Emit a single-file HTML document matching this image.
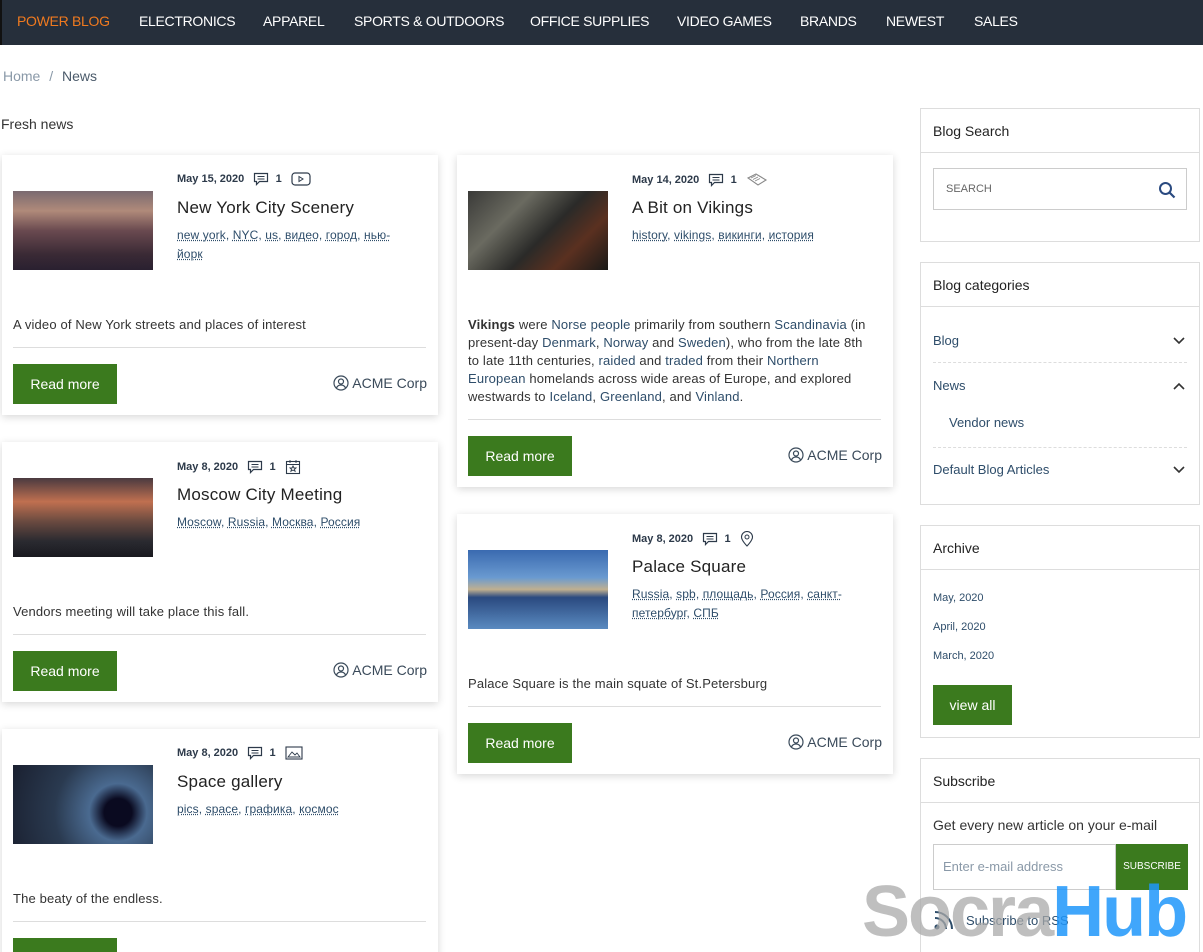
<!DOCTYPE html>
<html><head><meta charset="utf-8">
<style>
*{box-sizing:border-box;margin:0;padding:0}
html,body{width:1203px;height:952px;overflow:hidden}
body{background:#fff;font-family:"Liberation Sans","DejaVu Sans",sans-serif;color:#333;position:relative}
.nav{position:absolute;left:0;top:0;width:1203px;height:45px;background:#262f3b;border-left:2px solid #111}
.nav span{position:absolute;top:13px;font-size:14px;color:#fff;letter-spacing:-0.3px}
.a{position:absolute}
.card{position:absolute;background:#fff;box-shadow:0 2px 8px rgba(0,0,0,.16);width:436px}
.meta{position:absolute;left:175px;top:17px;font-size:11px;color:#2d3a4a;font-weight:bold;white-space:nowrap}
.meta svg{vertical-align:middle}
.img{position:absolute;left:11px;top:36px;width:140px;height:79px}
.title{position:absolute;left:175px;top:43px;font-size:17px;color:#222;letter-spacing:0.2px}
.tags{position:absolute;left:175px;top:71px;font-size:12px;color:#2e4d6a;line-height:19px;width:230px;letter-spacing:0.1px}
.tags u{text-decoration:underline dotted;}
.desc{position:absolute;left:11px;font-size:13px;color:#333;line-height:18px;width:418px;letter-spacing:0.15px}
.hr{position:absolute;left:11px;width:413px;height:1px;background:#ddd}
.btn{position:absolute;left:11px;width:104px;height:40px;background:#3b7a1e;color:#fff;font-size:14px;text-align:center;line-height:40px}
.auth{position:absolute;right:11px;font-size:14px;color:#3a4a5a}
.auth svg{vertical-align:-3px}
.box{position:absolute;left:920px;width:280px;border:1px solid #ddd;background:#fff}
.box h3{font-size:14px;font-weight:normal;color:#222;height:44px;line-height:44px;padding-left:12px;border-bottom:1px solid #ddd}
a{color:#2e4d6a;text-decoration:none}
</style></head><body>
<div class="nav">
<span style="left:15px;color:#f07a1f">POWER BLOG</span>
<span style="left:137px">ELECTRONICS</span>
<span style="left:261px">APPAREL</span>
<span style="left:352px">SPORTS &amp; OUTDOORS</span>
<span style="left:528px">OFFICE SUPPLIES</span>
<span style="left:675px">VIDEO GAMES</span>
<span style="left:798px">BRANDS</span>
<span style="left:884px">NEWEST</span>
<span style="left:972px">SALES</span>
</div>
<div class="a" style="left:3px;top:68px;font-size:14px;color:#8a99a8">Home <span style="margin:0 5px">/</span> <span style="color:#4a5a6a">News</span></div>
<div class="a" style="left:1px;top:116px;font-size:14px;color:#333">Fresh news</div>

<div class="card" style="left:2px;top:155px;height:260px">
 <div class="meta">May 15, 2020 &nbsp;&nbsp;<svg width="16" height="14" viewBox="0 0 16 14"><path d="M1.5 1.5h13v8h-8l-3 3v-3h-2z" fill="none" stroke="#2d3a4a" stroke-width="1.2"/><path d="M4.5 4.5h7M4.5 7h7" stroke="#2d3a4a" stroke-width="1"/></svg>&nbsp; 1 &nbsp;&nbsp;<svg width="20" height="14" viewBox="0 0 20 14"><rect x="1" y="1" width="18" height="12" rx="3" fill="none" stroke="#2d3a4a" stroke-width="1.2"/><path d="M8 4.5l4 2.5-4 2.5z" fill="none" stroke="#2d3a4a"/></svg></div>
 <div class="img" style="background:linear-gradient(180deg,#7a6a70 0%,#b08a7a 25%,#6a4a50 50%,#3a2a35 80%,#2a2030 100%)"></div>
 <div class="title">New York City Scenery</div>
 <div class="tags"><u>new york</u>, <u>NYC</u>, <u>us</u>, <u>видео</u>, <u>город</u>, <u>нью-йорк</u></div>
 <div class="desc" style="top:161px">A video of New York streets and places of interest</div>
 <div class="hr" style="top:192px"></div>
 <div class="btn" style="top:209px">Read more</div>
 <div class="auth" style="top:220px"><svg width="16" height="16" viewBox="0 0 16 16"><circle cx="8" cy="8" r="7" fill="none" stroke="#3a4a5a" stroke-width="1.2"/><circle cx="8" cy="6.5" r="2.5" fill="none" stroke="#3a4a5a" stroke-width="1.2"/><path d="M3.5 13c1-2.5 3-3 4.5-3s3.5.5 4.5 3" fill="none" stroke="#3a4a5a" stroke-width="1.2"/></svg> ACME Corp</div>
</div>

<div class="card" style="left:2px;top:442px;height:260px">
 <div class="meta">May 8, 2020 &nbsp;&nbsp;<svg width="16" height="14" viewBox="0 0 16 14"><path d="M1.5 1.5h13v8h-8l-3 3v-3h-2z" fill="none" stroke="#2d3a4a" stroke-width="1.2"/><path d="M4.5 4.5h7M4.5 7h7" stroke="#2d3a4a" stroke-width="1"/></svg>&nbsp; 1 &nbsp;&nbsp;<svg width="16" height="16" viewBox="0 0 16 16"><rect x="1.5" y="2.5" width="13" height="12" fill="none" stroke="#2d3a4a" stroke-width="1.1"/><path d="M1.5 5.5h13M5 1v3M11 1v3M8 7l1 2h2l-1.5 1.3.6 2-2.1-1.3-2.1 1.3.6-2L5 9h2z" fill="none" stroke="#2d3a4a" stroke-width="0.9"/></svg></div>
 <div class="img" style="background:linear-gradient(180deg,#4a3a40 0%,#c07050 30%,#6a4a40 55%,#2a2a30 80%,#1a1a20 100%)"></div>
 <div class="title">Moscow City Meeting</div>
 <div class="tags"><u>Moscow</u>, <u>Russia</u>, <u>Москва</u>, <u>Россия</u></div>
 <div class="desc" style="top:161px">Vendors meeting will take place this fall.</div>
 <div class="hr" style="top:192px"></div>
 <div class="btn" style="top:209px">Read more</div>
 <div class="auth" style="top:220px"><svg width="16" height="16" viewBox="0 0 16 16"><circle cx="8" cy="8" r="7" fill="none" stroke="#3a4a5a" stroke-width="1.2"/><circle cx="8" cy="6.5" r="2.5" fill="none" stroke="#3a4a5a" stroke-width="1.2"/><path d="M3.5 13c1-2.5 3-3 4.5-3s3.5.5 4.5 3" fill="none" stroke="#3a4a5a" stroke-width="1.2"/></svg> ACME Corp</div>
</div>

<div class="card" style="left:2px;top:729px;height:260px">
 <div class="meta">May 8, 2020 &nbsp;&nbsp;<svg width="16" height="14" viewBox="0 0 16 14"><path d="M1.5 1.5h13v8h-8l-3 3v-3h-2z" fill="none" stroke="#2d3a4a" stroke-width="1.2"/><path d="M4.5 4.5h7M4.5 7h7" stroke="#2d3a4a" stroke-width="1"/></svg>&nbsp; 1 &nbsp;&nbsp;<svg width="18" height="14" viewBox="0 0 18 14"><rect x="1" y="1" width="16" height="12" fill="none" stroke="#2d3a4a" stroke-width="1.1"/><path d="M3 11l4-5 3 3 2-2 3 4z" fill="none" stroke="#2d3a4a" stroke-width="0.9"/></svg></div>
 <div class="img" style="background:radial-gradient(circle at 75% 60%,#0a0a20 0 12%,#4a6a90 25%,#2a3a50 55%,#1a2030 100%)"></div>
 <div class="title">Space gallery</div>
 <div class="tags"><u>pics</u>, <u>space</u>, <u>графика</u>, <u>космос</u></div>
 <div class="desc" style="top:161px">The beaty of the endless.</div>
 <div class="hr" style="top:192px"></div>
 <div class="btn" style="top:209px">Read more</div>
</div>

<div class="card" style="left:457px;top:155px;height:332px">
 <div class="meta">May 14, 2020 &nbsp;&nbsp;<svg width="16" height="14" viewBox="0 0 16 14"><path d="M1.5 1.5h13v8h-8l-3 3v-3h-2z" fill="none" stroke="#2d3a4a" stroke-width="1.2"/><path d="M4.5 4.5h7M4.5 7h7" stroke="#2d3a4a" stroke-width="1"/></svg>&nbsp; 1 &nbsp;&nbsp;<svg width="22" height="16" viewBox="0 0 22 16"><path d="M2 6l8-4 10 6-8 5z" fill="none" stroke="#888" stroke-width="1.1"/><path d="M5 6l5-2.5M7 7.5l5-2.5M9 9l5-2.5" stroke="#888" stroke-width=".8"/></svg></div>
 <div class="img" style="background:linear-gradient(135deg,#3a3a38 0%,#6a6a60 30%,#2a2a28 55%,#5a3020 75%,#1a1a18 100%)"></div>
 <div class="title">A Bit on Vikings</div>
 <div class="tags"><u>history</u>, <u>vikings</u>, <u>викинги</u>, <u>история</u></div>
 <div class="desc" style="top:161px"><b>Vikings</b> were <a>Norse people</a> primarily from southern <a>Scandinavia</a> (in<br>present-day <a>Denmark</a>, <a>Norway</a> and <a>Sweden</a>), who from the late 8th<br>to late 11th centuries, <a>raided</a> and <a>traded</a> from their <a>Northern</a><br><a>European</a> homelands across wide areas of Europe, and explored<br>westwards to <a>Iceland</a>, <a>Greenland</a>, and <a>Vinland</a>.</div>
 <div class="hr" style="top:264px"></div>
 <div class="btn" style="top:281px">Read more</div>
 <div class="auth" style="top:292px"><svg width="16" height="16" viewBox="0 0 16 16"><circle cx="8" cy="8" r="7" fill="none" stroke="#3a4a5a" stroke-width="1.2"/><circle cx="8" cy="6.5" r="2.5" fill="none" stroke="#3a4a5a" stroke-width="1.2"/><path d="M3.5 13c1-2.5 3-3 4.5-3s3.5.5 4.5 3" fill="none" stroke="#3a4a5a" stroke-width="1.2"/></svg> ACME Corp</div>
</div>

<div class="card" style="left:457px;top:514px;height:260px">
 <div class="meta">May 8, 2020 &nbsp;&nbsp;<svg width="16" height="14" viewBox="0 0 16 14"><path d="M1.5 1.5h13v8h-8l-3 3v-3h-2z" fill="none" stroke="#2d3a4a" stroke-width="1.2"/><path d="M4.5 4.5h7M4.5 7h7" stroke="#2d3a4a" stroke-width="1"/></svg>&nbsp; 1 &nbsp;&nbsp;<svg width="14" height="16" viewBox="0 0 14 16"><path d="M7 15s-5.5-5.5-5.5-9a5.5 5.5 0 0111 0c0 3.5-5.5 9-5.5 9z" fill="none" stroke="#2d3a4a" stroke-width="1.1"/><circle cx="7" cy="6" r="2" fill="none" stroke="#2d3a4a"/></svg></div>
 <div class="img" style="background:linear-gradient(180deg,#3a6ab0 0%,#6a9ad0 35%,#c0b090 50%,#2a4a80 60%,#5a8ac0 100%)"></div>
 <div class="title">Palace Square</div>
 <div class="tags"><u>Russia</u>, <u>spb</u>, <u>площадь</u>, <u>Россия</u>, <u>санкт-петербург</u>, <u>СПБ</u></div>
 <div class="desc" style="top:161px">Palace Square is the main squate of St.Petersburg</div>
 <div class="hr" style="top:192px"></div>
 <div class="btn" style="top:209px">Read more</div>
 <div class="auth" style="top:220px"><svg width="16" height="16" viewBox="0 0 16 16"><circle cx="8" cy="8" r="7" fill="none" stroke="#3a4a5a" stroke-width="1.2"/><circle cx="8" cy="6.5" r="2.5" fill="none" stroke="#3a4a5a" stroke-width="1.2"/><path d="M3.5 13c1-2.5 3-3 4.5-3s3.5.5 4.5 3" fill="none" stroke="#3a4a5a" stroke-width="1.2"/></svg> ACME Corp</div>
</div>

<div class="box" style="top:108px;height:134px">
 <h3>Blog Search</h3>
 <div class="a" style="left:12px;top:59px;width:254px;height:42px;border:1px solid #ccc;font-size:11px;color:#666;line-height:40px;padding-left:12px">SEARCH
  <svg class="a" style="right:10px;top:12px" width="18" height="18" viewBox="0 0 18 18"><circle cx="7.5" cy="7.5" r="5.5" fill="none" stroke="#2a4a80" stroke-width="2"/><path d="M11.5 11.5l5 5" stroke="#2a4a80" stroke-width="2.2"/></svg></div>
</div>
<div class="box" style="top:262px;height:243px">
 <h3>Blog categories</h3>
 <div class="a" style="left:12px;top:70px;font-size:13px;color:#2e4d6a">Blog</div>
 <div class="a" style="left:12px;top:115px;font-size:13px;color:#2e4d6a">News</div>
 <div class="a" style="left:28px;top:152px;font-size:13px;color:#2e4d6a">Vendor news</div>
 <div class="a" style="left:12px;top:199px;font-size:13px;color:#2e4d6a">Default Blog Articles</div>
 <div class="a" style="left:12px;top:99px;width:254px;border-top:1px dashed #ddd"></div>
 <div class="a" style="left:12px;top:184px;width:254px;border-top:1px dashed #ddd"></div>
 <svg class="a" style="left:252px;top:74px" width="12" height="8"><path d="M1 1l5 5 5-5" fill="none" stroke="#333" stroke-width="1.6"/></svg>
 <svg class="a" style="left:252px;top:119px" width="12" height="8"><path d="M1 7l5-5 5 5" fill="none" stroke="#333" stroke-width="1.6"/></svg>
 <svg class="a" style="left:252px;top:203px" width="12" height="8"><path d="M1 1l5 5 5-5" fill="none" stroke="#333" stroke-width="1.6"/></svg>
</div>
<div class="box" style="top:525px;height:213px">
 <h3>Archive</h3>
 <div class="a" style="left:12px;top:66px;font-size:11px;color:#2e4d6a">May, 2020</div>
 <div class="a" style="left:12px;top:95px;font-size:11px;color:#2e4d6a">April, 2020</div>
 <div class="a" style="left:12px;top:124px;font-size:11px;color:#2e4d6a">March, 2020</div>
 <div class="a" style="left:12px;top:159px;width:79px;height:40px;background:#3b7a1e;color:#fff;font-size:14px;text-align:center;line-height:40px">view all</div>
</div>
<div class="box" style="top:758px;height:200px">
 <h3>Subscribe</h3>
 <div class="a" style="left:12px;top:58px;font-size:14px;color:#333">Get every new article on your e-mail</div>
 <div class="a" style="left:12px;top:85px;width:183px;height:46px;border:1px solid #ccc;font-size:13px;color:#8a99a8;line-height:44px;padding-left:9px">Enter e-mail address</div>
 <div class="a" style="left:195px;top:85px;width:72px;height:46px;background:#3b7a1e;color:#fff;font-size:10px;text-align:center;line-height:46px">SUBSCRIBE</div>
 <svg class="a" style="left:12px;top:150px" width="22" height="22" viewBox="0 0 22 22"><circle cx="4" cy="18" r="2.5" fill="#2e4d6a"/><path d="M2 9a11 11 0 0111 11M2 3a17 17 0 0117 17" fill="none" stroke="#2e4d6a" stroke-width="2"/></svg>
 <div class="a" style="left:45px;top:154px;font-size:13px;color:#2e4d6a">Subscribe to RSS</div>
</div>
<div class="a" style="left:862px;top:872px;font-size:72px;font-weight:bold;color:rgba(170,170,170,.75);letter-spacing:-2px;line-height:80px">Socra<span style="color:rgba(30,150,250,.85)">Hub</span></div>
</body></html>
